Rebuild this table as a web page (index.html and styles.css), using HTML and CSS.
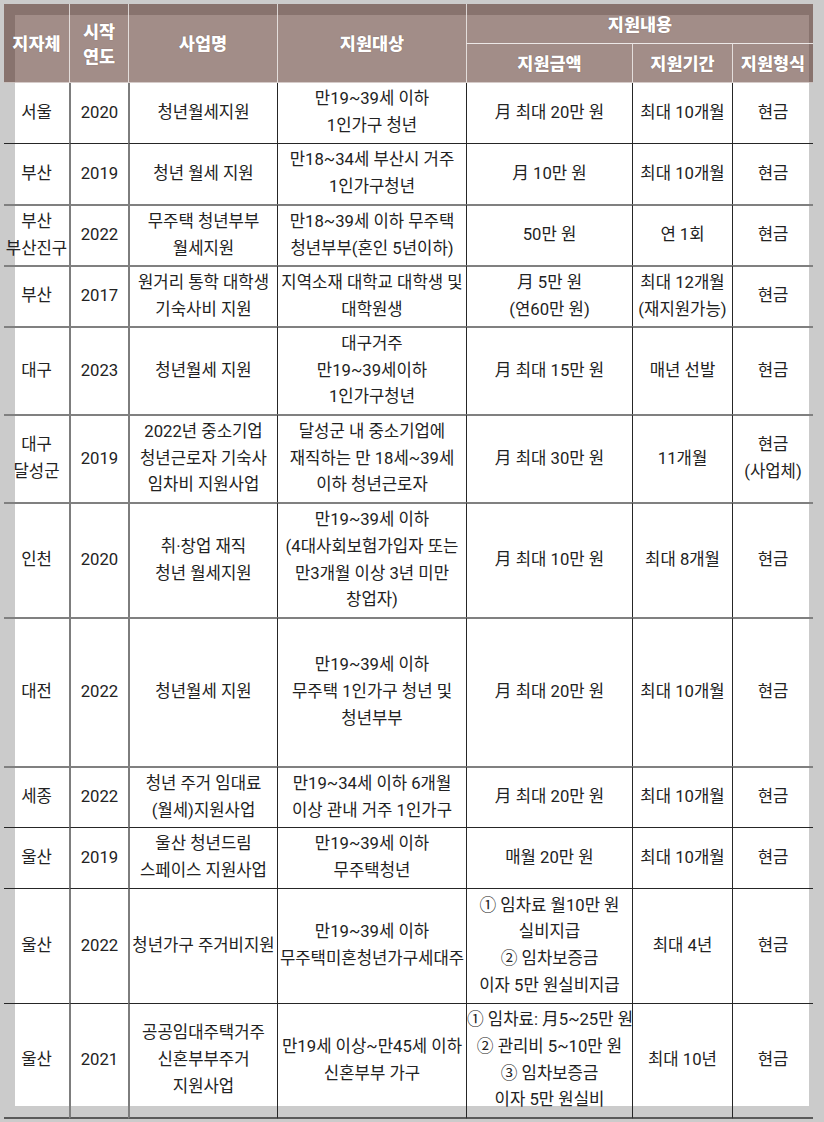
FILE: index.html
```html
<!DOCTYPE html>
<html lang="ko">
<head>
<meta charset="utf-8">
<title>지자체 청년 주거비 지원사업</title>
<link rel="stylesheet" href="styles.css">
</head>
<body>
<table class="grid">
  <colgroup>
    <col class="col-region">
    <col class="col-year">
    <col class="col-name">
    <col class="col-target">
    <col class="col-amount">
    <col class="col-period">
    <col class="col-type">
  </colgroup>
  <thead>
    <tr class="head-top">
      <th rowspan="2" class="first">지자체</th>
      <th rowspan="2">시작<br>연도</th>
      <th rowspan="2">사업명</th>
      <th rowspan="2">지원대상</th>
      <th colspan="3" class="group">지원내용</th>
    </tr>
    <tr class="head-sub">
      <th class="sub">지원금액</th>
      <th class="sub">지원기간</th>
      <th class="sub">지원형식</th>
    </tr>
  </thead>
  <tbody>
    <tr class="h2 no-top">
      <td>서울</td><td>2020</td><td>청년월세지원</td>
      <td>만19~39세 이하<br>1인가구 청년</td>
      <td>月 최대 20만 원</td><td>최대 10개월</td><td>현금</td>
    </tr>
    <tr class="h2">
      <td>부산</td><td>2019</td><td>청년 월세 지원</td>
      <td>만18~34세 부산시 거주<br>1인가구청년</td>
      <td>月 10만 원</td><td>최대 10개월</td><td>현금</td>
    </tr>
    <tr class="h2 soft">
      <td>부산<br>부산진구</td><td>2022</td><td>무주택 청년부부<br>월세지원</td>
      <td>만18~39세 이하 무주택<br>청년부부(혼인 5년이하)</td>
      <td>50만 원</td><td>연 1회</td><td>현금</td>
    </tr>
    <tr class="h2 soft">
      <td>부산</td><td>2017</td><td>원거리 통학 대학생<br>기숙사비 지원</td>
      <td>지역소재 대학교 대학생 및<br>대학원생</td>
      <td>月 5만 원<br>(연60만 원)</td><td>최대 12개월<br>(재지원가능)</td><td>현금</td>
    </tr>
    <tr class="h3 soft">
      <td>대구</td><td>2023</td><td>청년월세 지원</td>
      <td>대구거주<br>만19~39세이하<br>1인가구청년</td>
      <td>月 최대 15만 원</td><td>매년 선발</td><td>현금</td>
    </tr>
    <tr class="h3 soft">
      <td>대구<br>달성군</td><td>2019</td><td>2022년 중소기업<br>청년근로자 기숙사<br>임차비 지원사업</td>
      <td>달성군 내 중소기업에<br>재직하는 만 18세~39세<br>이하 청년근로자</td>
      <td>月 최대 30만 원</td><td>11개월</td><td>현금<br>(사업체)</td>
    </tr>
    <tr class="h4 soft">
      <td>인천</td><td>2020</td><td>취·창업 재직<br>청년 월세지원</td>
      <td>만19~39세 이하<br>(4대사회보험가입자 또는<br>만3개월 이상 3년 미만<br>창업자)</td>
      <td>月 최대 10만 원</td><td>최대 8개월</td><td>현금</td>
    </tr>
    <tr class="h-tall soft">
      <td>대전</td><td>2022</td><td>청년월세 지원</td>
      <td>만19~39세 이하<br>무주택 1인가구 청년 및<br>청년부부</td>
      <td>月 최대 20만 원</td><td>최대 10개월</td><td>현금</td>
    </tr>
    <tr class="h2 soft">
      <td>세종</td><td>2022</td><td>청년 주거 임대료<br>(월세)지원사업</td>
      <td>만19~34세 이하 6개월<br>이상 관내 거주 1인가구</td>
      <td>月 최대 20만 원</td><td>최대 10개월</td><td>현금</td>
    </tr>
    <tr class="h2">
      <td>울산</td><td>2019</td><td>울산 청년드림<br>스페이스 지원사업</td>
      <td>만19~39세 이하<br>무주택청년</td>
      <td>매월 20만 원</td><td>최대 10개월</td><td>현금</td>
    </tr>
    <tr class="h4">
      <td>울산</td><td>2022</td><td>청년가구 주거비지원</td>
      <td>만19~39세 이하<br>무주택미혼청년가구세대주</td>
      <td>① 임차료 월10만 원<br>실비지급<br>② 임차보증금<br>이자 5만 원실비지급</td>
      <td>최대 4년</td><td>현금</td>
    </tr>
    <tr class="h4 last">
      <td>울산</td><td>2021</td><td>공공임대주택거주<br>신혼부부주거<br>지원사업</td>
      <td>만19세 이상~만45세 이하<br>신혼부부 가구</td>
      <td>① 임차료: 月5~25만 원<br>② 관리비 5~10만 원<br>③ 임차보증금<br>이자 5만 원실비</td>
      <td>최대 10년</td><td>현금</td>
    </tr>
  </tbody>
</table>
</body>
</html>
```

FILE: styles.css
```css
html, body {
  margin: 0;
  padding: 0;
}

body {
  background: #cbcbcb;
  padding: 4px 0 0 4px;
  font-family: "Noto Sans CJK KR", "Noto Sans", sans-serif;
  color: #222;
}

.grid {
  table-layout: fixed;
  width: 809px;
  border-collapse: separate;
  border-spacing: 0;
  background: linear-gradient(#fff, #fff) 11px 11px / 794px 1091px no-repeat;
}

.col-region { width: 65px; }
.col-year { width: 59px; }
.col-name { width: 149px; }
.col-target { width: 189px; }
.col-amount { width: 166px; }
.col-period { width: 100px; }
.col-type { width: 81px; }

/* header */
.grid th {
  padding: 0;
  background: rgba(69, 27, 17, 0.5);
  color: #fff;
  font-size: 17.5px;
  font-weight: 900;
  line-height: 25.4px;
  text-align: center;
  vertical-align: middle;
  white-space: nowrap;
  border-left: 1px solid rgba(255, 255, 255, 0.7);
  border-bottom: 1px solid rgba(255, 255, 255, 0.55);
  text-shadow: 0 0 1px rgba(40, 20, 15, 0.45);
}

.grid th.first {
  border-left: none;
}

.grid th.group {
  border-bottom: none;
}

.grid th.sub {
  border-top: 1px solid rgba(255, 255, 255, 0.8);
}

.head-top { height: 39px; }
.head-sub { height: 40px; }

/* body */
.grid td {
  padding: 0;
  font-family: Roboto, "Noto Sans CJK KR", sans-serif;
  font-size: 16.7px;
  line-height: 26.7px;
  text-align: center;
  vertical-align: middle;
  white-space: nowrap;
  border-top: 1px solid #262626;
  border-left: 1px solid #262626;
}

.grid td:first-child {
  border-left: none;
}

.grid td:nth-child(2),
.grid td:nth-child(3) {
  border-left: 2px solid #7d7d7d;
}

.grid tr.soft td {
  border-top: 2px solid #808080;
}

.grid tr.no-top td {
  border-top: none;
}

.grid tr.last td {
  border-bottom: 2px solid #5a5a5a;
}

.h2 { height: 61px; }
.no-top { height: 60px; }
.h3 { height: 88px; }
.h4 { height: 115px; }
.h-tall { height: 149px; }
.last { height: 116px; }
```
